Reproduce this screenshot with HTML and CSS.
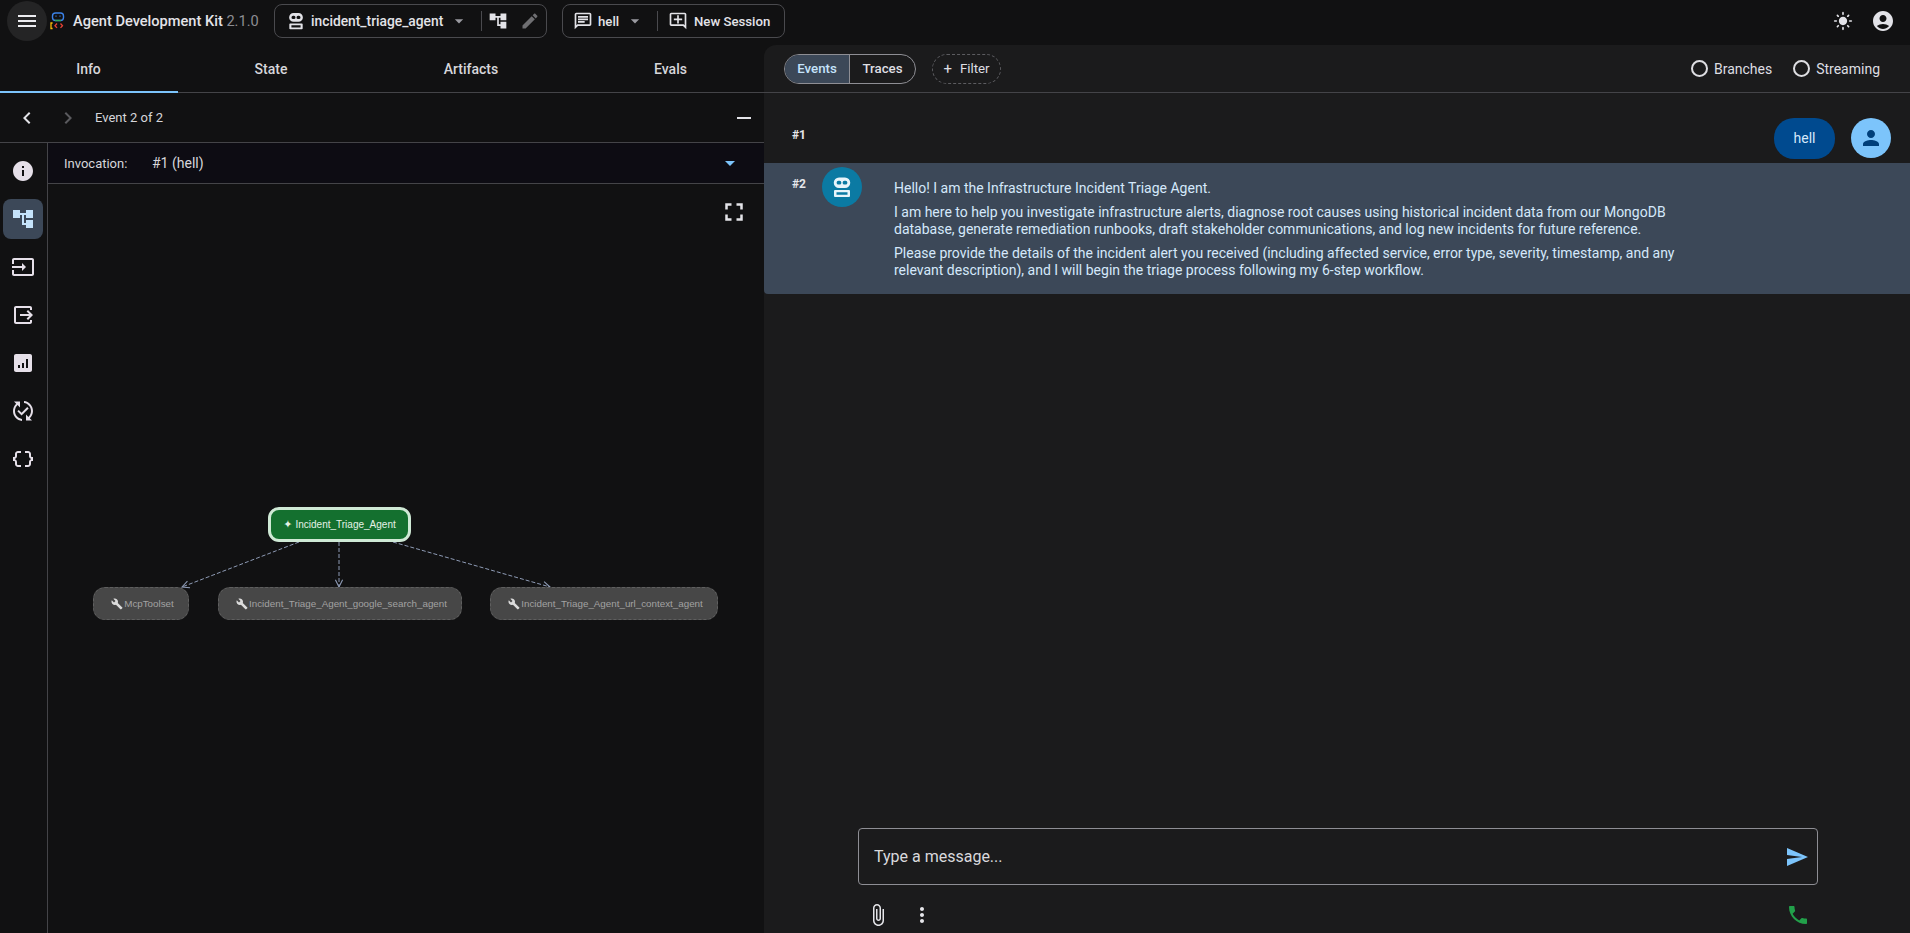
FILE: index.html
```html
<!DOCTYPE html>
<html lang="en">
<head>
    <meta charset="UTF-8">
    <title>Agent Development Kit</title>
    <link rel="stylesheet" href="styles.css">
</head>
<body>
    <!-- Shared icons -->
    <svg class="icon-defs" xmlns="http://www.w3.org/2000/svg">
        <symbol id="i-menu" viewBox="0 0 24 24"><path d="M3 18h18v-2H3v2zm0-5h18v-2H3v2zm0-7v2h18V6H3z"/></symbol>
        <symbol id="i-drop" viewBox="0 0 24 24"><path d="M7 10l5 5 5-5z"/></symbol>
        <symbol id="i-tree" viewBox="0 0 24 24"><path d="M22 11V3h-7v3H9V3H2v8h7V8h2v10h4v3h7v-8h-7v3h-2V8h2v3z"/></symbol>
        <symbol id="i-edit" viewBox="0 0 24 24"><path d="M3 17.25V21h3.75L17.81 9.94l-3.75-3.75L3 17.25zM20.71 7.04c.39-.39.39-1.02 0-1.41l-2.34-2.34c-.39-.39-1.02-.39-1.41 0l-1.83 1.83 3.75 3.75 1.83-1.83z"/></symbol>
        <symbol id="i-robot" viewBox="0 0 24 24"><path fill-rule="evenodd" d="M9 2.500h6a5 5 0 0 1 0 10.500H9a5 5 0 0 1 0-10.500zM8.500 5.800a1.900 1.900 0 0 0 0 3.800h1a1.900 1.900 0 0 0 0-3.800h-1zm6 0a1.900 1.900 0 0 0 0 3.800h1a1.900 1.900 0 0 0 0-3.800h-1zM5 15h14a1 1 0 0 1 1 1v5a1 1 0 0 1-1 1H5a1 1 0 0 1-1-1v-5a1 1 0 0 1 1-1zm1.500 2.200v2.600h11v-2.600h-11z"/></symbol>
        <symbol id="i-chat" viewBox="0 0 24 24"><path d="M20 2H4c-1.1 0-2 .9-2 2v18l4-4h14c1.1 0 2-.9 2-2V4c0-1.1-.9-2-2-2zm0 14H5.170L4 17.170V4h16v12z"/><path d="M6 12h8v2H6zm0-3h12v2H6zm0-3h12v2H6z"/></symbol>
        <symbol id="i-addchat" viewBox="0 0 24 24"><path d="M22 4c0-1.100-.9-2-2-2H4c-1.100 0-2 .9-2 2v12c0 1.100.9 2 2 2h14l4 4V4zm-2 13.170L18.830 16H4V4h16v13.170zM13 5h-2v4H7v2h4v4h2v-4h4V9h-4z"/></symbol>
        <symbol id="i-left" viewBox="0 0 24 24"><path d="M15.41 7.41L14 6l-6 6 6 6 1.41-1.41L10.83 12z"/></symbol>
        <symbol id="i-right" viewBox="0 0 24 24"><path d="M10 6L8.59 7.41 13.17 12l-4.58 4.59L10 18l6-6z"/></symbol>
        <symbol id="i-minus" viewBox="0 0 24 24"><path d="M19 13H5v-2h14v2z"/></symbol>
        <symbol id="i-full" viewBox="0 0 24 24"><path d="M7 14H5v5h5v-2H7v-3zm-2-4h2V7h3V5H5v5zm12 7h-3v2h5v-5h-2v3zM14 5v2h3v3h2V5h-5z"/></symbol>
        <symbol id="i-info" viewBox="0 0 24 24"><path d="M12 2C6.48 2 2 6.48 2 12s4.48 10 10 10 10-4.48 10-10S17.52 2 12 2zm1 15h-2v-6h2v6zm0-8h-2V7h2v2z"/></symbol>
        <symbol id="i-input" viewBox="0 0 24 24"><path d="M21 3.01H3c-1.1 0-2 .9-2 2V9h2V4.99h18v14.03H3V15H1v4.01c0 1.1.9 1.98 2 1.98h18c1.1 0 2-.88 2-1.98v-14c0-1.11-.9-2-2-2zM11 16l4-4-4-4v3H1v2h10v3z"/></symbol>
        <symbol id="i-output" viewBox="0 0 24 24"><path d="M17 17l5-5-5-5-1.41 1.41L18.17 11H9v2h9.17l-2.58 2.59z"/><path d="M19 19H5V5h14v2h2V5c0-1.1-.9-2-2-2H5c-1.1 0-2 .9-2 2v14c0 1.1.9 2 2 2h14c1.1 0 2-.9 2-2v-2h-2v2z"/></symbol>
        <symbol id="i-chart" viewBox="0 0 24 24"><path d="M19 3H5c-1.1 0-2 .9-2 2v14c0 1.1.9 2 2 2h14c1.1 0 2-.9 2-2V5c0-1.1-.9-2-2-2zM9 17H7v-3h2v3zm4 0h-2v-5h2v5zm4 0h-2V8h2v9z"/></symbol>
        <symbol id="i-sync" viewBox="0 0 24 24"><path d="M17.66 9.53l-7.07 7.07-4.24-4.24 1.41-1.41 2.83 2.83 5.66-5.66 1.41 1.41zM4 12c0-2.33 1.02-4.42 2.62-5.88L9 8.5v-6H3l2.2 2.2C3.24 6.52 2 9.11 2 12c0 5.19 3.95 9.45 9 9.95v-2.02C7.06 19.44 4 16.07 4 12zm18 0c0-5.19-3.95-9.45-9-9.95v2.02c3.94.49 7 3.86 7 7.93 0 2.33-1.02 4.42-2.62 5.88L15 15.5v6h6l-2.2-2.2c1.96-1.82 3.2-4.41 3.2-7.300z"/></symbol>
        <symbol id="i-json" viewBox="0 0 24 24"><path d="M4 7v2c0 .55-.45 1-1 1H2v4h1c.55 0 1 .45 1 1v2c0 1.65 1.35 3 3 3h3v-2H7c-.55 0-1-.45-1-1v-2c0-1.3-.84-2.42-2-2.83v-.34C5.16 11.42 6 10.3 6 9V7c0-.55.45-1 1-1h3V4H7C5.35 4 4 5.35 4 7zm17 3c-.55 0-1-.45-1-1V7c0-1.65-1.35-3-3-3h-3v2h3c.55 0 1 .45 1 1v2c0 1.3.84 2.42 2 2.83v.34c-1.16.41-2 1.52-2 2.83v2c0 .55-.45 1-1 1h-3v2h3c1.65 0 3-1.35 3-3v-2c0-.55.45-1 1-1h1v-4h-1z"/></symbol>
        <symbol id="i-sun" viewBox="0 0 24 24"><path d="M12 7c-2.76 0-5 2.24-5 5s2.24 5 5 5 5-2.24 5-5-2.24-5-5-5zM2 13h2c.55 0 1-.45 1-1s-.45-1-1-1H2c-.55 0-1 .45-1 1s.45 1 1 1zm18 0h2c.55 0 1-.45 1-1s-.45-1-1-1h-2c-.55 0-1 .45-1 1s.45 1 1 1zM11 2v2c0 .55.45 1 1 1s1-.45 1-1V2c0-.55-.45-1-1-1s-1 .45-1 1zm0 18v2c0 .55.45 1 1 1s1-.45 1-1v-2c0-.55-.45-1-1-1s-1 .45-1 1zM5.99 4.58a.996.996 0 00-1.41 0 .996.996 0 000 1.41l1.06 1.06c.39.39 1.03.39 1.41 0s.39-1.03 0-1.41L5.99 4.58zm12.37 12.37a.996.996 0 00-1.41 0 .996.996 0 000 1.41l1.06 1.06c.39.39 1.03.39 1.41 0a.996.996 0 000-1.41l-1.06-1.06zm1.06-10.96a.996.996 0 000-1.41.996.996 0 00-1.41 0l-1.06 1.06c-.39.39-.39 1.03 0 1.41s1.03.39 1.41 0l1.06-1.06zM7.05 18.36a.996.996 0 000-1.41.996.996 0 00-1.41 0l-1.06 1.06c-.39.39-.39 1.03 0 1.41s1.03.39 1.41 0l1.06-1.06z"/></symbol>
        <symbol id="i-account" viewBox="0 0 24 24"><path d="M12 2C6.48 2 2 6.48 2 12s4.48 10 10 10 10-4.48 10-10S17.52 2 12 2zm0 4c1.93 0 3.5 1.57 3.5 3.5S13.93 13 12 13s-3.5-1.57-3.5-3.5S10.07 6 12 6zm0 14c-2.03 0-4.43-.82-6.14-2.88C7.55 15.8 9.68 15 12 15s4.45.8 6.14 2.12C16.43 19.18 14.03 20 12 20z"/></symbol>
        <symbol id="i-person" viewBox="0 0 24 24"><path d="M12 12c2.21 0 4-1.79 4-4s-1.79-4-4-4-4 1.79-4 4 1.79 4 4 4zm0 2c-2.67 0-8 1.34-8 4v2h16v-2c0-2.66-5.33-4-8-4z"/></symbol>
        <symbol id="i-send" viewBox="0 0 24 24"><path d="M2.01 21L23 12 2.01 3 2 10l15 2-15 2z"/></symbol>
        <symbol id="i-clip" viewBox="0 0 24 24"><path d="M16.5 6v11.5c0 2.21-1.79 4-4 4s-4-1.79-4-4V5c0-1.38 1.12-2.5 2.5-2.5s2.5 1.12 2.5 2.5v10.5c0 .55-.45 1-1 1s-1-.45-1-1V6H10v9.5c0 1.38 1.12 2.5 2.5 2.5s2.5-1.12 2.5-2.5V5c0-2.21-1.79-4-4-4S7 2.79 7 5v12.5c0 3.04 2.46 5.5 5.5 5.5s5.5-2.46 5.5-5.5V6h-1.5z"/></symbol>
        <symbol id="i-more" viewBox="0 0 24 24"><path d="M12 8c1.1 0 2-.9 2-2s-.9-2-2-2-2 .9-2 2 .9 2 2 2zm0 2c-1.1 0-2 .9-2 2s.9 2 2 2 2-.9 2-2-.9-2-2-2zm0 6c-1.1 0-2 .9-2 2s.9 2 2 2 2-.9 2-2-.9-2-2-2z"/></symbol>
        <symbol id="i-call" viewBox="0 0 24 24"><path d="M6.62 10.79c1.44 2.83 3.76 5.14 6.59 6.59l2.2-2.2c.27-.27.67-.36 1.02-.24 1.12.37 2.33.57 3.57.57.55 0 1 .45 1 1V20c0 .55-.45 1-1 1-9.39 0-17-7.61-17-17 0-.55.45-1 1-1h3.5c.55 0 1 .45 1 1 0 1.25.2 2.45.57 3.57.11.35.03.74-.25 1.02l-2.2 2.2z"/></symbol>
        <symbol id="i-wrench" viewBox="0 0 24 24"><path d="M22.7 19l-9.1-9.1c.9-2.3.4-5-1.5-6.9-2-2-5-2.4-7.4-1.3L9 6 6 9 1.6 4.7C.4 7.1.9 10.1 2.9 12.1c1.9 1.9 4.6 2.4 6.9 1.5l9.1 9.1c.4.4 1 .4 1.4 0l2.3-2.3c.5-.4.5-1.1.1-1.4z"/></symbol>
    </svg>

    <!-- Top bar -->
    <header class="topbar">
        <button class="menu-btn"><svg class="ic ic-24"><use href="#i-menu"/></svg></button>
        <svg class="logo" viewBox="0 0 16 18">
            <rect x="2.500" y="1" width="11" height="7.500" rx="3" fill="none" stroke="#3b82e8" stroke-width="1.400"/>
            <path d="M5 8.500h6" stroke="#34a853" stroke-width="1.400"/>
            <path d="M5.500 4.200h1M9.500 4.200h1" stroke="#4285f4" stroke-width="1.200"/>
            <path d="M2.600 11H1v5.500h1.600" fill="none" stroke="#fbbc04" stroke-width="1.300"/>
            <path d="M7 11.500l-2 2.200 2 2.200" fill="none" stroke="#ea4335" stroke-width="1.300"/>
            <path d="M10.500 11.500l2 2.200-2 2.200" fill="none" stroke="#ea4335" stroke-width="1.300"/>
        </svg>
        <div class="brand">Agent Development Kit <span class="version">2.1.0</span></div>
        <div class="pill pill-agent">
            <svg class="ic ic-20"><use href="#i-robot"/></svg>
            <span class="pill-text agent-name">incident_triage_agent</span>
            <svg class="ic ic-20 muted"><use href="#i-drop"/></svg>
            <span class="pill-sep"></span>
            <svg class="ic ic-20"><use href="#i-tree"/></svg>
            <svg class="ic ic-20 dim"><use href="#i-edit"/></svg>
        </div>
        <div class="pill pill-session">
            <svg class="ic ic-20"><use href="#i-chat"/></svg>
            <span class="pill-text session-name">hell</span>
            <svg class="ic ic-20 muted"><use href="#i-drop"/></svg>
            <span class="pill-sep pill-sep-wide"></span>
            <svg class="ic ic-20"><use href="#i-addchat"/></svg>
            <span class="pill-text new-session">New Session</span>
        </div>
        <div class="topbar-right">
            <svg class="ic ic-20"><use href="#i-sun"/></svg>
            <svg class="ic ic-24"><use href="#i-account"/></svg>
        </div>
    </header>

    <div class="main">
        <!-- Left panel -->
        <section class="left">
            <nav class="tabs">
                <div class="tab tab-info active">Info</div>
                <div class="tab tab-state">State</div>
                <div class="tab tab-artifacts">Artifacts</div>
                <div class="tab tab-evals">Evals</div>
            </nav>
            <div class="event-nav">
                <svg class="ic ic-24"><use href="#i-left"/></svg>
                <svg class="ic ic-24 faded"><use href="#i-right"/></svg>
                <span class="event-label">Event 2 of 2</span>
                <svg class="ic ic-24 event-min"><use href="#i-minus"/></svg>
            </div>
            <div class="detail">
                <aside class="rail">
                    <div class="rail-item"><svg class="ic ic-24"><use href="#i-info"/></svg></div>
                    <div class="rail-item selected"><svg class="ic ic-24"><use href="#i-tree"/></svg></div>
                    <div class="rail-item"><svg class="ic ic-24"><use href="#i-input"/></svg></div>
                    <div class="rail-item"><svg class="ic ic-24"><use href="#i-output"/></svg></div>
                    <div class="rail-item"><svg class="ic ic-24"><use href="#i-chart"/></svg></div>
                    <div class="rail-item"><svg class="ic ic-24"><use href="#i-sync"/></svg></div>
                    <div class="rail-item"><svg class="ic ic-24"><use href="#i-json"/></svg></div>
                </aside>
                <div class="detail-body">
                    <div class="invocation">
                        <span class="inv-label">Invocation:</span>
                        <span class="inv-value">#1 (hell)</span>
                        <svg class="ic ic-24 inv-drop"><use href="#i-drop"/></svg>
                    </div>
                    <!-- Graph canvas -->
                    <div class="graph">
                        <svg class="ic graph-full"><use href="#i-full"/></svg>
                        <svg class="edges" width="716" height="749">
                            <defs>
                                <marker id="arrow" viewBox="0 0 10 10" refX="9" refY="5" markerWidth="9" markerHeight="9" orient="auto">
                                    <path d="M1 1L9 5L1 9" fill="none" stroke="#8e9bb5" stroke-width="1.200"/>
                                </marker>
                            </defs>
                            <line x1="251" y1="358" x2="134" y2="403" marker-end="url(#arrow)"/>
                            <line x1="291" y1="358" x2="291" y2="403" marker-end="url(#arrow)"/>
                            <line x1="345" y1="358" x2="502" y2="403" marker-end="url(#arrow)"/>
                        </svg>
                        <div class="node node-root"><span class="spark">✦</span>Incident_Triage_Agent</div>
                        <div class="node node-tool node-mcp"><svg class="wrench"><use href="#i-wrench"/></svg>McpToolset</div>
                        <div class="node node-tool node-search"><svg class="wrench"><use href="#i-wrench"/></svg>Incident_Triage_Agent_google_search_agent</div>
                        <div class="node node-tool node-url"><svg class="wrench"><use href="#i-wrench"/></svg>Incident_Triage_Agent_url_context_agent</div>
                    </div>
                </div>
            </div>
        </section>

        <!-- Right panel -->
        <section class="right">
            <div class="chat-head">
                <div class="segment">
                    <div class="seg seg-on">Events</div>
                    <div class="seg">Traces</div>
                </div>
                <div class="filter"><span class="plus">+</span>Filter</div>
                <div class="toggles">
                    <span class="radio"></span><span class="toggle-label">Branches</span>
                    <span class="radio radio-second"></span><span class="toggle-label">Streaming</span>
                </div>
            </div>
            <div class="messages">
                <div class="msg msg-user">
                    <span class="msg-num">#1</span>
                    <div class="bubble">hell</div>
                    <div class="avatar avatar-user"><svg class="ic ic-24"><use href="#i-person"/></svg></div>
                </div>
                <div class="msg msg-bot">
                    <span class="msg-num">#2</span>
                    <div class="avatar avatar-bot"><svg class="ic ic-24"><use href="#i-robot"/></svg></div>
                    <div class="msg-text">
                        <p>Hello! I am the Infrastructure Incident Triage Agent.</p>
                        <p>I am here to help you investigate infrastructure alerts, diagnose root causes using historical incident data from our MongoDB database, generate remediation runbooks, draft stakeholder communications, and log new incidents for future reference.</p>
                        <p>Please provide the details of the incident alert you received (including affected service, error type, severity, timestamp, and any relevant description), and I will begin the triage process following my 6-step workflow.</p>
                    </div>
                </div>
            </div>
            <div class="composer">
                <div class="input-box">
                    <span class="placeholder">Type a message...</span>
                    <svg class="ic ic-24 send"><use href="#i-send"/></svg>
                </div>
                <div class="composer-actions">
                    <svg class="ic ic-24"><use href="#i-clip"/></svg>
                    <svg class="ic ic-24 more"><use href="#i-more"/></svg>
                    <svg class="ic ic-24 call"><use href="#i-call"/></svg>
                </div>
            </div>
        </section>
    </div>
</body>
</html>
```

FILE: styles.css
```css
* {
    box-sizing: border-box;
}
html, body {
    height: 100%;
}
body {
    margin: 0;
    background-color: #111112;
    color: #e3e3e8;
    font-family: Roboto, "Liberation Sans", sans-serif;
    font-size: 14px;
    overflow: hidden;
    display: flex;
    flex-direction: column;
}
.icon-defs {
    display: none;
}
.ic {
    fill: currentColor;
    flex: none;
    display: block;
}
.ic-24 {
    width: 24px;
    height: 24px;
}
.ic-20 {
    width: 20px;
    height: 20px;
}
.muted {
    color: #9a9aa0;
}
.dim {
    color: #6f6f72;
}
.faded {
    color: #5a5a5e;
}

/* Top bar */
.topbar {
    height: 45px;
    flex: none;
    display: flex;
    align-items: flex-start;
    padding-left: 7px;
}
.menu-btn {
    width: 40px;
    height: 40px;
    margin-top: 1px;
    border: 0;
    border-radius: 50%;
    background-color: #242425;
    color: #ececf0;
    padding: 8px;
}
.logo {
    width: 16px;
    height: 18px;
    margin: 12px 0 0 3px;
}
.brand {
    margin: 12px 0 0 7px;
    font-size: 14.6px;
    font-weight: 500;
    line-height: 18px;
    width: 201px;
    white-space: nowrap;
}
.version {
    color: #8d8d92;
    font-weight: 400;
}
.pill {
    height: 34px;
    margin-top: 4px;
    border: 1px solid #4a4a4e;
    border-radius: 8px;
    display: flex;
    align-items: center;
}
.pill-agent {
    width: 273px;
    padding-left: 11px;
}
.pill-session {
    width: 223px;
    margin-left: 15px;
    padding-left: 10px;
}
.pill-text {
    font-size: 13.2px;
    font-weight: 500;
    white-space: nowrap;
    margin-left: 5px;
}
.agent-name {
    width: 138px;
    font-size: 13.8px;
}
.session-name {
    width: 27px;
}
.new-session {
    margin-left: 6px;
}
.pill-sep {
    width: 1px;
    height: 20px;
    background-color: #4a4a4e;
    margin: 0 6px 0 12px;
}
.pill-sep-wide {
    margin-right: 10px;
}
.pill-agent .dim {
    margin-left: 12px;
}
.topbar-right {
    margin-left: auto;
    display: flex;
    align-items: center;
    gap: 18px;
    padding: 9px 15px 0 0;
}

.main {
    flex: 1;
    display: flex;
    min-height: 0;
}

/* Left panel */
.left {
    width: 764px;
    flex: none;
    display: flex;
    flex-direction: column;
}
.tabs {
    height: 48px;
    flex: none;
    display: flex;
    border-bottom: 1px solid #444448;
}
.tab {
    position: relative;
    display: flex;
    align-items: center;
    justify-content: center;
    font-size: 14px;
    font-weight: 500;
    color: #d6d6da;
    padding-top: 1px;
}
.tab-info {
    width: 177px;
}
.tab-state {
    width: 188px;
}
.tab-artifacts {
    width: 212px;
}
.tab-evals {
    width: 187px;
}
.tab.active::after {
    content: "";
    position: absolute;
    left: 0;
    right: -1px;
    bottom: -1px;
    height: 2px;
    background-color: #7cc4fb;
}
.event-nav {
    height: 50px;
    flex: none;
    display: flex;
    align-items: center;
    padding-left: 15px;
    border-bottom: 1px solid #444448;
}
.event-nav .faded {
    margin-left: 17px;
}
.event-label {
    font-size: 13px;
    margin-left: 15px;
    color: #d6d6da;
}
.event-min {
    margin-left: auto;
    margin-right: 8px;
}
.detail {
    flex: 1;
    display: flex;
    min-height: 0;
}
.rail {
    width: 48px;
    flex: none;
    border-right: 1px solid #444448;
    padding: 8px 0 0 3px;
}
.rail-item {
    width: 40px;
    height: 40px;
    margin-bottom: 8px;
    border-radius: 8px;
    display: flex;
    align-items: center;
    justify-content: center;
    color: #e6e0e9;
}
.rail-item.selected {
    background-color: #3c4858;
    color: #c5e3fb;
}
.detail-body {
    flex: 1;
    display: flex;
    flex-direction: column;
    min-width: 0;
}
.invocation {
    height: 41px;
    flex: none;
    display: flex;
    align-items: center;
    padding-left: 16px;
    background-color: #0d0c13;
    border-bottom: 1px solid #444448;
}
.inv-label {
    font-size: 13px;
    color: #d6d6da;
    width: 88px;
}
.inv-value {
    font-size: 14px;
    color: #d6d6da;
}
.inv-drop {
    margin-left: auto;
    margin-right: 22px;
    color: #7cc4fb;
}

/* Graph canvas */
.graph {
    position: relative;
    flex: 1;
}
.graph-full {
    position: absolute;
    left: 671px;
    top: 13px;
    width: 30px;
    height: 30px;
}
.edges {
    position: absolute;
    left: 0;
    top: 0;
    stroke: #8e9bb5;
    stroke-width: 1;
    stroke-dasharray: 4 2;
}
.edges marker path {
    stroke-dasharray: none;
}
.node {
    position: absolute;
    display: flex;
    align-items: center;
    justify-content: center;
    font-family: "Liberation Sans", Arial, sans-serif;
    font-size: 9.8px;
    white-space: nowrap;
}
.node-root {
    left: 220px;
    top: 323px;
    width: 143px;
    height: 35px;
    background-color: #14702f;
    border: 3px solid #cfe9d5;
    border-radius: 11px;
    color: #e4f2e7;
    font-size: 10px;
}
.spark {
    margin-right: 3px;
    font-family: "DejaVu Sans", sans-serif;
    font-size: 11px;
}
.node-tool {
    top: 403px;
    height: 33px;
    padding-left: 3px;
    background-color: #474747;
    border: 1.500px dashed #5f5f5f;
    border-radius: 12px;
    color: #a2a2a2;
}
.wrench {
    width: 12px;
    height: 12px;
    fill: #dcdcdc;
    margin-right: 1px;
    flex: none;
}
.node-mcp {
    left: 45px;
    width: 96px;
}
.node-search {
    left: 170px;
    width: 244px;
}
.node-url {
    left: 442px;
    width: 228px;
}

/* Right panel */
.right {
    flex: 1;
    min-width: 0;
    display: flex;
    flex-direction: column;
    background-color: #1b1b1c;
    border-top-left-radius: 12px;
}
.chat-head {
    height: 48px;
    flex: none;
    display: flex;
    align-items: center;
    padding: 0 30px 0 20px;
    border-bottom: 1px solid #444448;
}
.segment {
    display: flex;
    width: 132px;
    height: 30px;
    border: 1px solid #8e8e94;
    border-radius: 15px;
    overflow: hidden;
}
.seg {
    flex: 1;
    display: flex;
    align-items: center;
    justify-content: center;
    font-size: 13.3px;
    font-weight: 500;
    color: #dedee2;
    padding-bottom: 1px;
}
.seg-on {
    background-color: #3c4858;
    border-right: 1px solid #8e8e94;
    flex: none;
    width: 65px;
    color: #c5e3fb;
}
.filter {
    width: 69px;
    height: 30px;
    margin-left: 16px;
    border: 1px dashed #5c5c60;
    border-radius: 15px;
    display: flex;
    align-items: center;
    justify-content: center;
    font-size: 13.3px;
    color: #dedee2;
}
.plus {
    margin-right: 8px;
    font-size: 15px;
}
.toggles {
    margin-left: auto;
    display: flex;
    align-items: center;
}
.radio {
    width: 17px;
    height: 17px;
    border: 2px solid #dedee2;
    border-radius: 50%;
}
.radio-second {
    margin-left: 21px;
}
.toggle-label {
    margin-left: 6px;
    font-size: 14px;
    color: #dedee2;
}
.messages {
    flex: 1;
    min-height: 0;
    padding-top: 25px;
}
.msg {
    position: relative;
    display: flex;
}
.msg-num {
    position: absolute;
    left: 28px;
    top: 10px;
    font-size: 12px;
    font-weight: 700;
    color: #e6e6ea;
}
.msg-user {
    height: 45px;
    justify-content: flex-end;
    padding-right: 19px;
    gap: 16px;
}
.bubble {
    width: 61px;
    height: 41px;
    border-radius: 20px;
    background-color: #004a8f;
    color: #d5e8fb;
    display: flex;
    align-items: center;
    justify-content: center;
    padding-bottom: 2px;
}
.avatar {
    width: 40px;
    height: 40px;
    border-radius: 50%;
    display: flex;
    align-items: center;
    justify-content: center;
    flex: none;
}
.avatar-user {
    background-color: #7cc4fb;
    color: #003f7a;
}
.msg-bot {
    height: 131px;
    background-color: #3c4858;
    padding: 4px 0 0 58px;
    border-radius: 0 0 0 4px;
}
.msg-bot .msg-num {
    top: 14px;
}
.avatar-bot {
    background-color: #0b7aa3;
    color: #e8f4fa;
}
.msg-text {
    margin: 13px 0 0 32px;
    width: 790px;
    font-size: 14px;
    line-height: 17px;
    color: #d5e8fb;
}
.msg-text p {
    margin: 0 0 7px;
}

/* Composer */
.composer {
    flex: none;
    padding: 0 92px 0 94px;
}
.input-box {
    height: 57px;
    border: 1px solid #8e8e94;
    border-radius: 4px;
    display: flex;
    align-items: center;
    padding: 0 8px 0 15px;
}
.placeholder {
    font-size: 16px;
    color: #d9d9dd;
}
.send {
    margin-left: auto;
    color: #7cc4fb;
}
.composer-actions {
    display: flex;
    align-items: center;
    height: 48px;
    padding: 12px 8px 0 8px;
    color: #e6e6ea;
}
.more {
    margin-left: 20px;
}
.call {
    margin-left: auto;
    color: #22a04a;
}
```
